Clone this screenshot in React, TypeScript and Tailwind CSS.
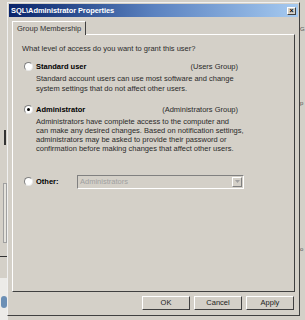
import React from 'react'

const font = { fontFamily: '"Liberation Sans", Arial, sans-serif' }

function Radio({ checked }: { checked?: boolean }) {
  return (
    <span className="relative inline-block w-[9px] h-[9px] rounded-full bg-white border border-t-[#808080] border-l-[#808080] border-b-[#e8e8e8] border-r-[#e8e8e8] shrink-0">
      {checked && <span className="absolute left-[2px] top-[2px] w-[3px] h-[3px] rounded-full bg-black" />}
    </span>
  )
}

function Btn({ label }: { label: string }) {
  return (
    <div className="w-[48px] h-[14px] flex items-center justify-center border border-t-white border-l-white border-b-[#404040] border-r-[#404040] bg-[#d4d0c8] text-[7.5px] text-[#222]">
      {label}
    </div>
  )
}

export default function App() {
  return (
    <div className="relative w-[305px] h-[320px] overflow-hidden bg-[#d4d0c8] text-black" style={font}>
      {/* window behind the dialog */}
      <div className="absolute left-[4px] top-[130px] w-[2px] h-[15px] bg-[#333]" />
      <div className="absolute left-[3px] top-[183px] w-[4px] h-[60px] border border-[#a0a0a0] bg-[#e4e2dc]" />
      <div className="absolute left-0 top-[256px] w-[8px] h-[1px] bg-[#333]" />
      <div className="absolute left-0 top-[278px] w-[8px] h-[42px] bg-[#ecebe8]" />
      <div className="absolute left-[1px] top-[296px] w-[6px] h-[12px] rounded-full bg-[#6b8fb5]" />
      <div className="absolute left-[300px] top-[26px] text-[6px] leading-[6px] text-[#555]">G</div>
      <div className="absolute left-[300px] top-[100px] text-[6px] leading-[6px] text-[#555]">p</div>
      <div className="absolute left-[300px] top-[246px] text-[6px] leading-[6px] text-[#555]">o</div>

      {/* dialog */}
      <div className="absolute left-[7px] top-[2px] w-[293px] h-[314px] bg-[#d4d0c8] border border-t-[#f0f0f0] border-l-[#f0f0f0] border-b-[#404040] border-r-[#404040] p-[1px] flex flex-col">
        <div className="h-[13px] flex items-center justify-between pl-[2px] pr-[2px] bg-gradient-to-r from-[#0a246a] via-[#5b82c0] to-[#a6caf0]">
          <span className="text-white font-bold text-[7.5px] tracking-[-0.1px]">SQL\Administrator Properties</span>
          <span className="w-[9px] h-[8px] bg-[#d4d0c8] border border-t-white border-l-white border-b-[#404040] border-r-[#404040] flex items-center justify-center text-[7px] leading-none font-bold">×</span>
        </div>

        <div className="flex flex-col pl-[3px] pr-[3px] pt-[3px] flex-1">
          <div className="flex">
            <div className="h-[14px] px-[4px] flex items-center bg-[#d4d0c8] border border-b-0 border-t-white border-l-white border-r-[#404040] text-[7.5px] text-[#333] relative top-[1px] z-10">
              Group Membership
            </div>
          </div>
          <div className="h-[258px] border border-t-white border-l-white border-b-[#404040] border-r-[#404040] pl-[9px] pr-[8px] pt-[9px] text-[7.5px] text-[#2a2a2a]">
            <div className="leading-[10px]">What level of access do you want to grant this user?</div>

            <div className="mt-[7px] ml-[2px] flex items-center gap-[3px]">
              <Radio />
              <span className="font-bold text-black">Standard user</span>
              <span className="ml-auto mr-[48px]">(Users Group)</span>
            </div>
            <div className="pl-[14px] mt-[2px] leading-[10px]">
              Standard account users can use most software and change
              <br />
              system settings that do not affect other users.
            </div>

            <div className="mt-[10px] ml-[2px] flex items-center gap-[3px]">
              <Radio checked />
              <span className="font-bold text-black">Administrator</span>
              <span className="ml-auto mr-[48px]">(Administrators Group)</span>
            </div>
            <div className="pl-[14px] mt-[1px] leading-[9px]">
              Administrators have complete access to the computer and
              <br />
              can make any desired changes. Based on notification settings,
              <br />
              administrators may be asked to provide their password or
              <br />
              confirmation before making changes that affect other users.
            </div>

            <div className="mt-[22px] ml-[2px] flex items-center gap-[3px]">
              <Radio />
              <span className="font-bold text-black w-[38px]">Other:</span>
              <div className="w-[167px] h-[14px] bg-[#d4d0c8] border border-t-[#808080] border-l-[#808080] border-b-white border-r-white flex items-center justify-between pl-[2px] pr-[1px]">
                <span className="text-[#a0a0a0]">Administrators</span>
                <span className="w-[10px] h-[10px] border border-t-white border-l-white border-b-[#808080] border-r-[#808080] flex items-center justify-center">
                  <svg width="5" height="3" viewBox="0 0 5 3"><path d="M0 0h5L2.5 3z" fill="#a0a0a0" /></svg>
                </span>
              </div>
            </div>
          </div>

          <div className="flex justify-end gap-[4px] mt-[4px] pr-[1px]">
            <Btn label="OK" />
            <Btn label="Cancel" />
            <Btn label="Apply" />
          </div>
        </div>
      </div>
    </div>
  )
}
